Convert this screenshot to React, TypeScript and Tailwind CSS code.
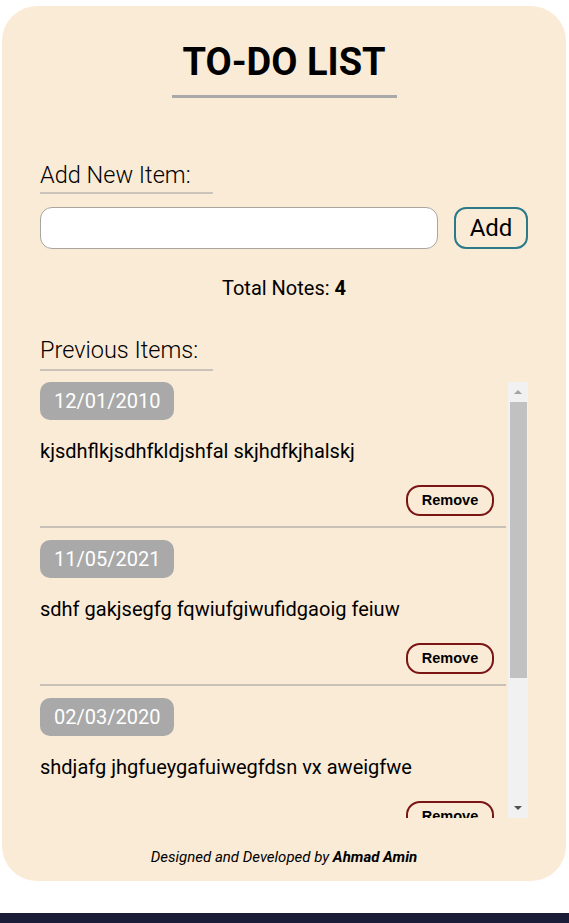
import React from "react";

const notes = [
  { date: "12/01/2010", text: "kjsdhflkjsdhfkldjshfal skjhdfkjhalskj" },
  { date: "11/05/2021", text: "sdhf gakjsegfg fqwiufgiwufidgaoig feiuw" },
  { date: "02/03/2020", text: "shdjafg jhgfueygafuiwegfdsn vx aweigfwe" },
  { date: "07/08/2019", text: "asdkjfh aslkdjf qwoeiru zmxncb" },
];

export default function App() {
  return (
    <div className="bg-white min-h-[923px] font-['Roboto',sans-serif] text-black">
      <div className="ml-[2px] mt-[6px] w-[564px] h-[875px] bg-[#faebd7] rounded-[35px] pt-[36px] px-[38px] flex flex-col">
        <h1 className="text-center text-[38px] leading-[40px] font-bold">TO-DO LIST</h1>
        <div className="mx-auto mt-[13px] w-[225px] h-[3px] bg-[#a9a9a9]" />

        <div className="mt-[64px] text-[23.5px] leading-[26px] font-light">Add New Item:</div>
        <div className="mt-[4px] w-[173px] h-[2px] bg-[#cbc3b9]" />

        <div className="mt-[13px] flex items-center gap-[16px]">
          <input
            type="text"
            className="w-[398px] h-[42px] bg-white border border-[#a9a5a1] rounded-[12px] px-3 outline-none"
          />
          <button className="w-[74px] h-[42px] border-2 border-[#2b7a8c] rounded-[12px] text-[24px] leading-none">
            Add
          </button>
        </div>

        <div className="mt-[26px] text-center text-[20px] leading-[26px]">
          Total Notes: <span className="font-bold">4</span>
        </div>

        <div className="mt-[36px] text-[23.5px] leading-[26px] font-light">Previous Items:</div>
        <div className="mt-[6px] w-[173px] h-[2px] bg-[#cbc3b9]" />

        <div className="mt-[11px] h-[436px] flex">
          <div className="flex-1 overflow-y-auto [scrollbar-width:none]">
            {notes.map((n, i) => (
              <div key={i} className="mb-[12px] mr-[2px] pb-[10px] border-b-2 border-[#c9c1b7]">
                <div className="inline-flex items-center h-[38px] px-[14px] rounded-[10px] bg-[#a9a9a9] text-white text-[20px]">
                  {n.date}
                </div>
                <div className="mt-[18px] text-[20px] leading-[27px]">{n.text}</div>
                <div className="mt-[20px] flex justify-end pr-[12px]">
                  <button className="w-[88px] h-[31px] border-2 border-[#7b1414] rounded-[14px] font-['Liberation_Sans',sans-serif] font-bold text-[14.5px]">
                    Remove
                  </button>
                </div>
              </div>
            ))}
          </div>
          <div className="w-[20px] flex flex-col bg-[#f1f1f1]">
            <div className="h-[20px] flex items-center justify-center">
              <svg width="8" height="4" viewBox="0 0 8 4">
                <polygon points="0,4 4,0 8,4" fill="#a3a3a3" />
              </svg>
            </div>
            <div className="flex-1 px-[1.5px]">
              <div className="h-[276px] bg-[#c1c1c1]" />
            </div>
            <div className="h-[20px] flex items-center justify-center">
              <svg width="8" height="4" viewBox="0 0 8 4">
                <polygon points="0,0 8,0 4,4" fill="#505050" />
              </svg>
            </div>
          </div>
        </div>

        <div className="mt-[29px] text-center text-[15px] leading-[20px] italic">
          Designed and Developed by <span className="font-bold">Ahmad Amin</span>
        </div>
      </div>
      <div className="mt-[32px] h-[10px] bg-[#1b1c38]" />
    </div>
  );
}
